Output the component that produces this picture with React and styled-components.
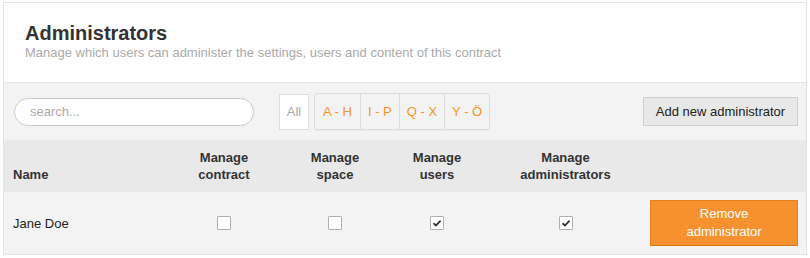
import React from "react";
import styled, { createGlobalStyle } from "styled-components";

const GlobalStyle = createGlobalStyle`
  body {
    margin: 0;
    background: #ffffff;
    font-family: "Liberation Sans", Arial, sans-serif;
  }
`;

const Panel = styled.section`
  margin: 2px 3px 0 3px;
  width: 802px;
  border: 1px solid #e4e4e4;
  background: #fff;
`;

const Header = styled.header`
  padding: 17px 21px 0 21px;
  height: 62px;
  border-bottom: 1px solid #e6e6e6;

  h1 {
    margin: 0;
    font-size: 20px;
    line-height: 26px;
    font-weight: 700;
    color: #333;
  }

  p {
    margin: -1px 0 0 0;
    font-size: 13px;
    line-height: 16px;
    color: #aaaaaa;
  }
`;

const Toolbar = styled.div`
  display: flex;
  align-items: center;
  height: 57px;
  padding: 0 8px 0 10px;
  background: #f3f3f3;
`;

const Search = styled.input`
  box-sizing: border-box;
  width: 240px;
  height: 28px;
  border: 1px solid #cccccc;
  border-radius: 14px;
  padding: 0 15px;
  font-family: inherit;
  font-size: 13px;
  background: #fff;
  outline: none;

  &::placeholder {
    color: #aaa;
  }
`;

const AllButton = styled.button`
  box-sizing: border-box;
  margin-left: 25px;
  width: 30px;
  height: 36px;
  padding: 0;
  border: 1px solid #dedede;
  background: #fff;
  color: #aaa;
  font-family: inherit;
  font-size: 13px;
`;

const LetterGroup = styled.div`
  display: flex;
  margin-left: 5px;
  height: 35px;
  border: 1px solid #dcdcdc;
  border-radius: 3px;
  box-shadow: 0 1px 1px rgba(0, 0, 0, 0.04);
  overflow: hidden;
`;

const Letter = styled.button`
  border: none;
  border-left: ${p => (p.$first ? "none" : "1px solid #dcdcdc")};
  background: #f3f3f3;
  padding: 0 ${p => p.$pad}px;
  color: #f7931e;
  font-family: inherit;
  font-size: 13px;
`;

const AddButton = styled.button`
  margin-left: auto;
  box-sizing: border-box;
  height: 29px;
  width: 155px;
  border: 1px solid #cfcfcf;
  background: #e8e8e8;
  color: #222;
  font-family: inherit;
  font-size: 13px;
`;

const Row = styled.div`
  display: grid;
  grid-template-columns: 161px 118px 104px 100px 157px 162px;
  align-items: ${p => (p.$head ? "end" : "center")};
  height: ${p => (p.$head ? 52 : 62)}px;
  background: ${p => (p.$head ? "#e9e9e9" : "#f3f3f3")};
  box-sizing: border-box;
  padding-bottom: ${p => (p.$head ? 9 : 0)}px;
`;

const HeadCell = styled.div`
  font-size: 13px;
  font-weight: 700;
  line-height: 17px;
  color: #333;
  text-align: ${p => (p.$left ? "left" : "center")};
  padding-left: ${p => (p.$left ? 9 : 0)}px;
`;

const Cell = styled.div`
  display: flex;
  justify-content: ${p => (p.$left ? "flex-start" : "center")};
  padding-left: ${p => (p.$left ? 9 : 0)}px;
  font-size: 13px;
  color: #222;
`;

const Box = styled.span`
  display: inline-flex;
  align-items: center;
  justify-content: center;
  width: 12px;
  height: 12px;
  border: 1px solid #b0b0b0;
  background: #fff;
  border-radius: 1px;
`;

const RemoveButton = styled.button`
  box-sizing: border-box;
  width: 148px;
  height: 46px;
  margin-left: -2px;
  border: 1px solid #e3801f;
  border-bottom-color: #d9761a;
  background: #f5922f;
  color: #fff;
  font-family: inherit;
  font-size: 13px;
  line-height: 18px;
  padding: 0;
`;

const Checkbox = ({ checked }) => (
  <Box>
    {checked && (
      <svg width="10" height="10" viewBox="0 0 10 10">
        <path d="M1.5 5.2 L4 7.4 L8.6 2.6" fill="none" stroke="#333" strokeWidth="1.8" />
      </svg>
    )}
  </Box>
);

const letters = [
  { label: "A - H", pad: 8 },
  { label: "I - P", pad: 7 },
  { label: "Q - X", pad: 7 },
  { label: "Y - Ö", pad: 7 },
];

const admins = [{ name: "Jane Doe", perms: [false, false, true, true] }];

export default function App() {
  return (
    <>
      <GlobalStyle />
      <Panel>
        <Header>
          <h1>Administrators</h1>
          <p>Manage which users can administer the settings, users and content of this contract</p>
        </Header>
        <Toolbar>
          <Search placeholder="search..." />
          <AllButton>All</AllButton>
          <LetterGroup>
            {letters.map((l, i) => (
              <Letter key={l.label} $first={i === 0} $pad={l.pad}>
                {l.label}
              </Letter>
            ))}
          </LetterGroup>
          <AddButton>Add new administrator</AddButton>
        </Toolbar>
        <Row $head>
          <HeadCell $left>Name</HeadCell>
          <HeadCell>Manage<br />contract</HeadCell>
          <HeadCell>Manage<br />space</HeadCell>
          <HeadCell>Manage<br />users</HeadCell>
          <HeadCell>Manage<br />administrators</HeadCell>
          <HeadCell />
        </Row>
        {admins.map(a => (
          <Row key={a.name}>
            <Cell $left>{a.name}</Cell>
            {a.perms.map((p, i) => (
              <Cell key={i}>
                <Checkbox checked={p} />
              </Cell>
            ))}
            <Cell>
              <RemoveButton>Remove<br />administrator</RemoveButton>
            </Cell>
          </Row>
        ))}
      </Panel>
    </>
  );
}
